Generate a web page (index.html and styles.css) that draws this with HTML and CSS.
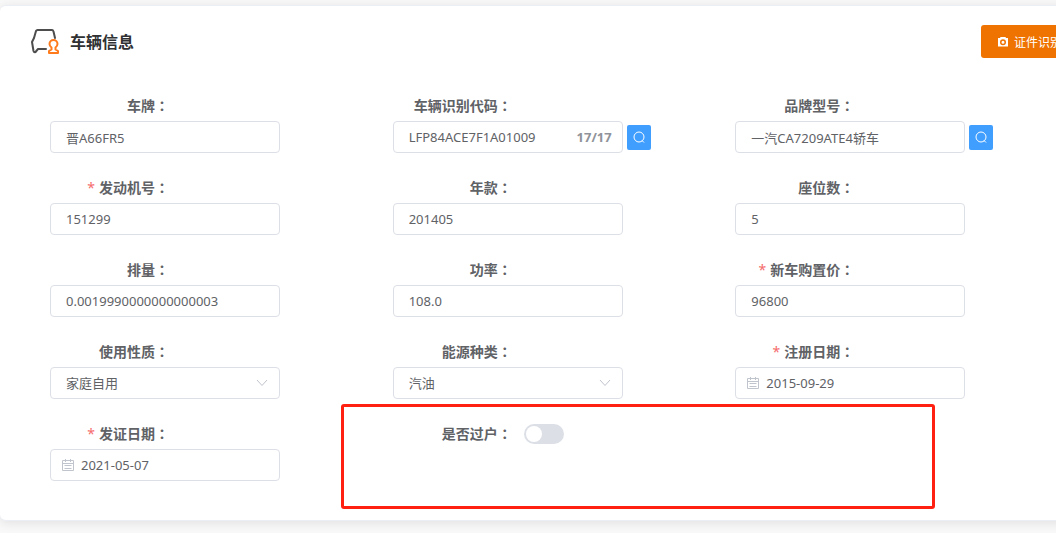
FILE: index.html
```
<!DOCTYPE html>
<html lang="zh-CN">
<head>
    <meta charset="UTF-8">
    <meta name="viewport" content="width=device-width, initial-scale=1.0">
    <title>车辆信息</title>
    <link rel="stylesheet" href="styles.css">
</head>
<body>
    <section class="card">
        <header class="card-header">
            <svg class="car-icon" viewBox="0 0 30 28" width="30" height="28" fill="none" stroke-width="2" stroke-linejoin="round" stroke-linecap="round" aria-hidden="true">
                <path stroke="#4d4d4d" d="M25 10 23.500 3.500Q23 2 22 2H7.500Q6.500 2 6 3L4 10 2 14 3.500 23Q4 24.500 5.500 24L8 21H16"/>
                <path stroke="#ff7a1a" d="M21.500 19.500Q19.500 18 19.500 16A4 4 0 0 1 27.500 16Q27.500 18 25.500 19.500V21.500L28 23V25H19V23L21.500 21.500Z"/>
            </svg>
            <h1 class="title">车辆信息</h1>
            <button class="scan-btn" type="button">
                <svg viewBox="0 0 12 12" width="12" height="12" aria-hidden="true">
                    <path fill="#fff" fill-rule="evenodd" d="M3.500 1H8.500L9 2H11V10.500H1V2H3ZM6 3.200A3 3 0 1 0 6 9.200A3 3 0 1 0 6 3.200ZM6 4.700A1.500 1.500 0 1 1 6 7.700A1.500 1.500 0 1 1 6 4.700Z"/>
                </svg>
                <span>证件识别</span>
            </button>
        </header>

        <form class="form">
            <div class="field">
                <label class="label" for="plate">车牌<span class="colon" lang="zh-TW">：</span></label>
                <div class="control">
                    <div class="input-box"><input id="plate" type="text" value="晋A66FR5"></div>
                </div>
            </div>
            <div class="field">
                <label class="label" for="vin">车辆识别代码<span class="colon" lang="zh-TW">：</span></label>
                <div class="control">
                    <div class="input-box">
                        <input id="vin" type="text" maxlength="17" value="LFP84ACE7F1A01009">
                        <span class="count">17/17</span>
                    </div>
                    <button class="search-btn" type="button" aria-label="查询车辆识别代码">
                        <svg viewBox="0 0 12 12" width="12" height="12" fill="none" stroke="#fff" aria-hidden="true"><circle cx="6" cy="6" r="5"/><path d="M9 9.500 11 11.500"/></svg>
                    </button>
                </div>
            </div>
            <div class="field">
                <label class="label" for="model">品牌型号<span class="colon" lang="zh-TW">：</span></label>
                <div class="control">
                    <div class="input-box"><input id="model" type="text" value="一汽CA7209ATE4轿车"></div>
                    <button class="search-btn" type="button" aria-label="查询品牌型号">
                        <svg viewBox="0 0 12 12" width="12" height="12" fill="none" stroke="#fff" aria-hidden="true"><circle cx="6" cy="6" r="5"/><path d="M9 9.500 11 11.500"/></svg>
                    </button>
                </div>
            </div>

            <div class="field">
                <label class="label" for="engine"><span class="star">*</span>发动机号<span class="colon" lang="zh-TW">：</span></label>
                <div class="control">
                    <div class="input-box"><input id="engine" type="text" value="151299"></div>
                </div>
            </div>
            <div class="field">
                <label class="label" for="year">年款<span class="colon" lang="zh-TW">：</span></label>
                <div class="control">
                    <div class="input-box"><input id="year" type="text" value="201405"></div>
                </div>
            </div>
            <div class="field">
                <label class="label" for="seats">座位数<span class="colon" lang="zh-TW">：</span></label>
                <div class="control">
                    <div class="input-box"><input id="seats" type="text" value="5"></div>
                </div>
            </div>

            <div class="field">
                <label class="label" for="displacement">排量<span class="colon" lang="zh-TW">：</span></label>
                <div class="control">
                    <div class="input-box"><input id="displacement" type="text" value="0.0019990000000000003"></div>
                </div>
            </div>
            <div class="field">
                <label class="label" for="power">功率<span class="colon" lang="zh-TW">：</span></label>
                <div class="control">
                    <div class="input-box"><input id="power" type="text" value="108.0"></div>
                </div>
            </div>
            <div class="field">
                <label class="label" for="price"><span class="star">*</span>新车购置价<span class="colon" lang="zh-TW">：</span></label>
                <div class="control">
                    <div class="input-box"><input id="price" type="text" value="96800"></div>
                </div>
            </div>

            <div class="field">
                <label class="label" for="usage">使用性质<span class="colon" lang="zh-TW">：</span></label>
                <div class="control">
                    <div class="input-box select-box">
                        <select id="usage"><option>家庭自用</option></select>
                        <svg class="arrow" viewBox="0 0 12 8" width="12" height="8" fill="none" stroke="#c0c4cc" aria-hidden="true"><path d="M1 1 6 6.500 11 1"/></svg>
                    </div>
                </div>
            </div>
            <div class="field">
                <label class="label" for="energy">能源种类<span class="colon" lang="zh-TW">：</span></label>
                <div class="control">
                    <div class="input-box select-box">
                        <select id="energy"><option>汽油</option></select>
                        <svg class="arrow" viewBox="0 0 12 8" width="12" height="8" fill="none" stroke="#c0c4cc" aria-hidden="true"><path d="M1 1 6 6.500 11 1"/></svg>
                    </div>
                </div>
            </div>
            <div class="field">
                <label class="label" for="regDate"><span class="star">*</span>注册日期<span class="colon" lang="zh-TW">：</span></label>
                <div class="control">
                    <div class="input-box date-box">
                        <svg viewBox="0 0 12 12" width="12" height="12" fill="none" stroke="#c0c4cc" aria-hidden="true"><path d="M.5 1.500H11.500V11.500H.5ZM.5 4.500H11.500M3.500 0V3M8.500 0V3M2.500 6.500H9.500M2.500 9.500H9.500"/></svg>
                        <input id="regDate" type="text" value="2015-09-29">
                    </div>
                </div>
            </div>

            <div class="field">
                <label class="label" for="issueDate"><span class="star">*</span>发证日期<span class="colon" lang="zh-TW">：</span></label>
                <div class="control">
                    <div class="input-box date-box">
                        <svg viewBox="0 0 12 12" width="12" height="12" fill="none" stroke="#c0c4cc" aria-hidden="true"><path d="M.5 1.500H11.500V11.500H.5ZM.5 4.500H11.500M3.500 0V3M8.500 0V3M2.500 6.500H9.500M2.500 9.500H9.500"/></svg>
                        <input id="issueDate" type="text" value="2021-05-07">
                    </div>
                </div>
            </div>
            <div class="field switch-field">
                <label class="label" for="transfer">是否过户<span class="colon" lang="zh-TW">：</span></label>
                <input class="switch" id="transfer" type="checkbox" role="switch">
                <div class="highlight"></div>
            </div>
        </form>
    </section>
</body>
</html>
```
FILE: styles.css
```
* {
    box-sizing: border-box;
}
body {
    margin: 0;
    padding: 5px 0 12px;
    overflow-x: hidden;
    background-color: #f9f9f9;
    color: #606266;
    font-family: "Noto Sans", "Noto Sans CJK SC", sans-serif;
    font-size: 13px;
}
input,
select,
button {
    margin: 0;
    font: inherit;
    color: inherit;
}
/* the card runs on past the right edge of the window */
.card {
    width: calc(100% + 73px);
    padding: 19px 0 39px;
    border: 1px solid #ebeef5;
    border-left: 0;
    border-radius: 6px;
    background-color: #fff;
    box-shadow: 0 2px 12px rgba(0, 0, 0, 0.1);
}
.card-header {
    display: flex;
    align-items: center;
    padding: 0 50px 0 30px;
    margin-bottom: 31px;
}
.car-icon {
    margin-right: 10px;
}
.title {
    margin: 0;
    font-size: 16px;
    line-height: 24px;
    font-weight: bold;
    color: #303133;
}
.scan-btn {
    display: flex;
    align-items: center;
    gap: 5px;
    height: 33px;
    margin-left: auto;
    padding: 0 16px;
    border: 0;
    border-radius: 3px;
    background-color: #ef7300;
    color: #fff;
    font-size: 12px;
}
.form {
    display: grid;
    grid-template-columns: repeat(3, 1fr);
    row-gap: 18px;
    padding: 0 50px;
}
.label {
    display: block;
    width: 131px;
    padding-right: 12px;
    font-size: 14px;
    line-height: 32px;
    height: 32px;
    font-weight: bold;
    text-align: right;
    white-space: nowrap;
}
/* the TC face centres the full-width colon */
.colon {
    font-family: "Noto Sans CJK TC", sans-serif;
}
.star {
    margin-right: 4px;
    color: #f56c6c;
    font-weight: normal;
}
.control {
    display: flex;
    align-items: center;
    gap: 4px;
}
.input-box {
    display: flex;
    align-items: center;
    position: relative;
    width: 230px;
    height: 32px;
    border: 1px solid #dcdfe6;
    border-radius: 4px;
    background-color: #fff;
}
.input-box input,
.input-box select {
    flex: 1;
    min-width: 0;
    height: 30px;
    padding: 0 15px;
    border: 0;
    outline: 0;
    background: none;
}
.input-box select {
    appearance: none;
}
.arrow {
    position: absolute;
    right: 11px;
    pointer-events: none;
}
.date-box {
    padding-left: 11px;
}
.date-box input {
    padding: 0 7px;
}
.count {
    padding-right: 10px;
    color: #909399;
    font-weight: bold;
}
.search-btn {
    display: flex;
    align-items: center;
    justify-content: center;
    width: 24px;
    height: 25px;
    padding: 0;
    border: 0;
    border-radius: 2px;
    background-color: #409eff;
}
.switch-field {
    display: flex;
    align-items: flex-start;
    position: relative;
}
.switch {
    appearance: none;
    width: 40px;
    height: 20px;
    margin: 7px 0;
    padding: 2px;
    border-radius: 10px;
    background-color: #dcdfe6;
}
.switch::before {
    content: "";
    display: block;
    width: 16px;
    height: 16px;
    border-radius: 50%;
    background-color: #fff;
}
.switch:checked {
    background-color: #409eff;
}
.switch:checked::before {
    margin-left: auto;
}
.highlight {
    position: absolute;
    top: -13px;
    left: -52px;
    width: 594px;
    height: 105px;
    border: 3px solid #ff2012;
    border-radius: 3px;
    pointer-events: none;
}
```
